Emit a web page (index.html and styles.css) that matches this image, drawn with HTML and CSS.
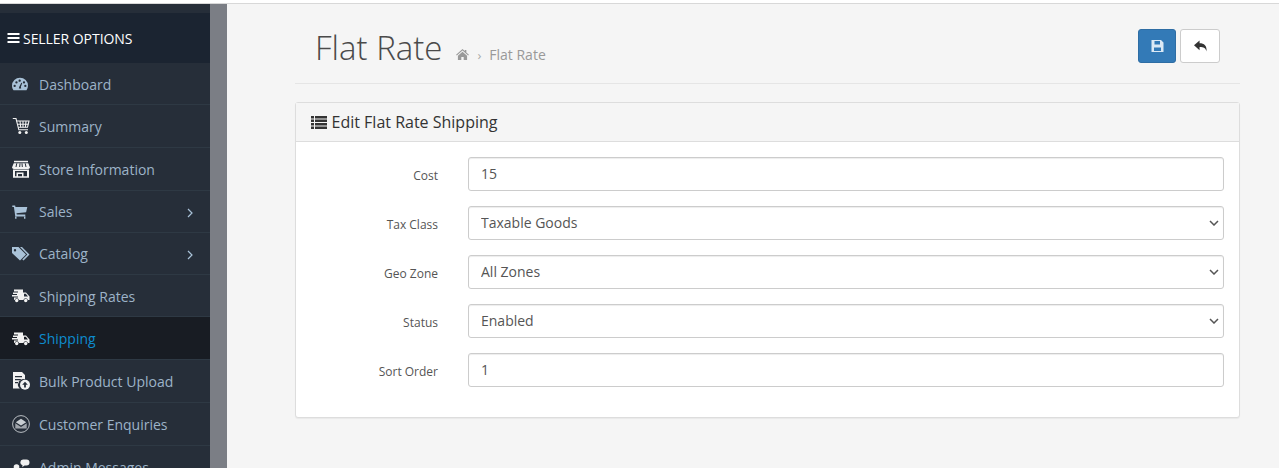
FILE: index.html
```html
<!DOCTYPE html>
<html lang="en">
<head>
<meta charset="utf-8">
<title>Flat Rate</title>
<link rel="stylesheet" href="styles.css">
</head>
<body>
<div class="topbar"></div>
<div class="layout">
  <aside class="sidebar">
    <div class="side-head"><svg class="bars" viewBox="0 0 12 10"><path d="M0 0h12v2H0zM0 4h12v2H0zM0 8h12v2H0z"/></svg>SELLER OPTIONS</div>
    <nav class="menu">
      <a class="item low"><svg class="ic blue" viewBox="0 -3.100 20.250 20.250"><path fill-rule="evenodd" d="M9 0a9 9 0 0 0-9 9c0 2 .7 3.700 1.700 5h14.600A8.800 8.800 0 0 0 18 9a9 9 0 0 0-9-9zM3 10.500a1.300 1.300 0 1 1 0-2.600 1.300 1.300 0 0 1 0 2.600zm2-4a1.300 1.300 0 1 1 0-2.600 1.300 1.300 0 0 1 0 2.600zm4-2A1.300 1.300 0 1 1 9 2a1.300 1.300 0 0 1 0 2.500zM10.300 12H7.700l.5-2 2.300-4.500 1 .4L10 10zm4.700-1.500a1.300 1.300 0 1 1 0-2.600 1.300 1.300 0 0 1 0 2.600zm-1.500-4a1.300 1.300 0 1 1 0-2.600 1.300 1.300 0 0 1 0 2.600z"/></svg>Dashboard</a>
      <a class="item tall"><svg class="ic white" viewBox="0 0 18 18"><g class="line"><path d="M.8 1.500h3.200l2.800 11.300h9.200"/><path d="M4.600 4H17l-1.500 6.300H6.100"/><path d="M8 4l.7 6.300M11 4v6.300M14 4l-.6 6.300M5.400 7.200h11"/></g><circle cx="7.800" cy="15.400" r="1.500"/><circle cx="14.300" cy="15.400" r="1.500"/></svg>Summary</a>
      <a class="item tall"><svg class="ic white" viewBox="0 0 18 18"><path d="M2 .8h14v1.500H2z"/><path d="M1.700 3.300h14.600L18 7.600a1.800 1.800 0 0 1-1.800 1.400H1.800A1.800 1.800 0 0 1 0 7.600z"/><g class="cut"><path d="M4.800 3.300 4 7M8 3.300 7.700 7M10 3.300 10.300 7M13.200 3.300 14 7"/></g><path fill-rule="evenodd" d="M1 9.500h16v8.300H1zm2 1.500v5.300h1.500v-3.800h7v3.800H15V11zm3 3v2.300h4V14z"/></svg>Store Information</a>
      <a class="item has-sub"><svg class="ic blue" viewBox="-.3 -2.500 18 18"><path d="M0 0h2.800l.4 1.500H15l-1.200 5.300-9.600.9.300 1.300H13V11H3L1.600 1.500H0z"/><path d="M2.800 11h1.400v2.200H2.800zM11.700 11h1.400v2.200h-1.400z"/></svg>Sales<svg class="chev" viewBox="0 0 6 10"><path d="M1 1l4 4-4 4"/></svg></a>
      <a class="item has-sub"><svg class="ic blue" viewBox="0 -2 18 18"><path fill-rule="evenodd" d="M0 0h6.500L14 7.500 8 13.500 0 6zM3 2a1.200 1.200 0 1 0 0 2.400A1.200 1.200 0 0 0 3 2z"/><path d="M8 0h2l7.500 7.500-6 6-1.200-1.100 5-4.900z"/></svg>Catalog<svg class="chev" viewBox="0 0 6 10"><path d="M1 1l4 4-4 4"/></svg></a>
      <a class="item low"><svg class="ic white" viewBox="0 -2.500 18 18"><path d="M2 0h9v3h3l3.500 4v3.500h-1.600a2.300 2.300 0 0 0-4.500 0H7a2.300 2.300 0 0 0-4.500 0H2V8h4V7H0V5.500h5v-1H1V3h5V2H2zm10 4.200V7h4l-2.200-2.800z"/><circle cx="4.700" cy="11" r="1.700"/><circle cx="13.700" cy="11" r="1.700"/></svg>Shipping Rates</a>
      <a class="item active tall low"><svg class="ic white" viewBox="0 -2.500 18 18"><path d="M2 0h9v3h3l3.500 4v3.500h-1.600a2.300 2.300 0 0 0-4.500 0H7a2.300 2.300 0 0 0-4.500 0H2V8h4V7H0V5.500h5v-1H1V3h5V2H2zm10 4.200V7h4l-2.200-2.800z"/><circle cx="4.700" cy="11" r="1.700"/><circle cx="13.700" cy="11" r="1.700"/></svg>Shipping</a>
      <a class="item tall"><svg class="ic white" viewBox="0 0 18 18"><path fill-rule="evenodd" d="M1 0h9l3 3v4.300A5.400 5.400 0 0 0 7.800 16.500H1zm2 4v1.300h7V4zm0 3v1.300h6V7zm0 3v1.300h4V10z"/><circle cx="13" cy="12.800" r="5"/><path class="arrow" d="M13 9.700l2.800 3h-1.900v2.800h-1.800v-2.800h-1.900z"/></svg>Bulk Product Upload</a>
      <a class="item tall"><svg class="ic soft" viewBox="0 0 18 18"><circle cx="9" cy="9" r="8.400" fill="none" stroke="currentColor" stroke-width=".9"/><path d="M9 3.800l5.200 3.400L9 10.500 3.800 7.200z"/><path d="M3.300 8.300 9 12l5.700-3.700V13.500H3.300z" opacity=".75"/></svg>Customer Enquiries</a>
      <a class="item tall"><svg class="ic white" viewBox="0 0 18 18"><circle cx="4.500" cy="9" r="2.800"/><path d="M.7 17c0-3 1.500-4.500 3.800-4.500S8.300 14 8.300 17z"/><path d="M11 1.500h3.500a3 3 0 0 1 0 6h-2l-2.300 1.800.4-1.900A3 3 0 0 1 11 1.500z"/></svg>Admin Messages</a>
    </nav>
  </aside>
  <div class="gutter"></div>
  <main class="content">
    <header class="page-head">
      <div class="title-wrap">
        <h1>Flat Rate</h1>
        <ul class="crumbs">
          <li><svg class="home" viewBox="0 0 14 12"><path d="M7 0l2.500 2.200V1h1.700v2.700L14 6.200l-.8.900L7 1.700.8 7.100 0 6.200zM2 7.400 7 3l5 4.400V12H8.300V8.700H5.700V12H2z"/></svg></li>
          <li class="sep">›</li>
          <li>Flat Rate</li>
        </ul>
      </div>
      <div class="actions">
        <button class="btn primary" type="button"><svg viewBox="0 0 12 12"><path fill-rule="evenodd" d="M0 0h9.500L12 2.500V12H0zM3 1v3.500h5.500V1zM2.500 7.500V11h7V7.500z"/></svg></button>
        <button class="btn plain" type="button"><svg viewBox="0 0 14 12"><path d="M6 0v3c5 0 8 2.500 7.500 9-.8-3.500-3-4.800-7.500-4.800V10.500L0 5.200z"/></svg></button>
      </div>
    </header>
    <section class="panel">
      <div class="panel-head"><svg class="list" viewBox="0 0 16 13"><path d="M0 0h3v2.500H0zM4 0h12v2.500H4zM0 3.500h3V6H0zM4 3.500h12V6H4zM0 7h3v2.500H0zM4 7h12v2.500H4zM0 10.500h3V13H0zM4 10.500h12V13H4z"/></svg><h3>Edit Flat Rate Shipping</h3></div>
      <form class="panel-body">
        <div class="field"><label for="c">Cost</label><input id="c" class="control" value="15"></div>
        <div class="field"><label for="t">Tax Class</label><div class="select-box"><select id="t" class="control"><option>Taxable Goods</option></select><svg class="caret" viewBox="0 0 10 6"><path d="M1 1l4 4 4-4"/></svg></div></div>
        <div class="field"><label for="g">Geo Zone</label><div class="select-box"><select id="g" class="control"><option>All Zones</option></select><svg class="caret" viewBox="0 0 10 6"><path d="M1 1l4 4 4-4"/></svg></div></div>
        <div class="field"><label for="s">Status</label><div class="select-box"><select id="s" class="control"><option>Enabled</option></select><svg class="caret" viewBox="0 0 10 6"><path d="M1 1l4 4 4-4"/></svg></div></div>
        <div class="field"><label for="o">Sort Order</label><input id="o" class="control" value="1"></div>
      </form>
    </section>
  </main>
</div>
</body>
</html>
```
FILE: styles.css
```css
* { box-sizing: border-box; }
html, body { margin: 0; height: 100%; overflow: hidden; }
body { background: #f5f5f5; font-family: "Open Sans", sans-serif; color: #444; font-size: 14px; }
.topbar { height: 4px; background: linear-gradient(#fff 0, #fff 2.500px, #d8d8d8 3.500px, #e4e4e4 4px); }
.layout { display: flex; height: 464px; }
.sidebar { width: 210px; flex: none; background: #262e39; padding-top: 9px; overflow: hidden; }
.side-head { height: 50px; background: #1b2431; color: #fff; font-size: 14px; display: flex; align-items: center; padding-left: 7px; letter-spacing: -.05px; }
.bars { width: 13px; height: 10px; fill: #fff; margin-right: 3px; }
.menu { display: flex; flex-direction: column; }
.item { height: 42px; flex: none; display: flex; align-items: center; padding-left: 12px; color: #9db3c8; font-size: 14px; border-bottom: 1px solid #2e3944; position: relative; }
.item.tall { height: 43px; }
.item.low { padding-top: 1px; }
.ic { width: 18px; height: 18px; margin-right: 9px; flex: none; fill: currentColor; }
.ic.blue { color: #a9c2d8; }
.ic.white { color: #f2f2f2; }
.ic.soft { color: #c9ced2; }
.line { fill: none; stroke: currentColor; stroke-width: 1.100; }
.cut { fill: none; stroke: #262e39; stroke-width: 1; }
.arrow { fill: #262e39; }
.item.active { background: #181c23; color: #0d8ccf; }
.chev { position: absolute; right: 17px; top: 17px; width: 6px; height: 10px; fill: none; stroke: #a9c2d8; stroke-width: 1.200; }
.gutter { width: 17px; flex: none; background: #7b7e85; }
.content { flex: none; width: 945px; margin-left: 68px; }
.page-head { height: 80px; border-bottom: 1px solid #e5e5e5; display: flex; justify-content: space-between; padding: 24px 20px 0 20px; }
.title-wrap { display: flex; align-items: baseline; }
h1 { margin: 0; font-weight: 300; font-size: 33px; line-height: 40px; color: #4a4a4a; }
.crumbs { list-style: none; margin: 0 0 0 14px; padding: 0; display: flex; align-items: center; gap: 8px; color: #999; font-size: 14px; }
.home { width: 13px; height: 11px; fill: #999; display: block; }
.sep { color: #aaa; font-size: 13px; }
.actions { display: flex; gap: 4px; align-items: flex-start; margin-top: 1px; }
.btn { width: 38px; height: 34px; border-radius: 3px; border: 1px solid #ccc; padding: 0; display: flex; align-items: center; justify-content: center; }
.btn svg { width: 13px; height: 12px; }
.btn.primary { background: #337ab7; border-color: #2e6da4; }
.btn.primary svg { fill: #dbe9f5; }
.btn.plain { background: #fff; width: 40px; }
.btn.plain svg { fill: #333; }
.panel { margin-top: 18px; background: #fff; border: 1px solid #ddd; border-radius: 3px; box-shadow: 0 1px 1px rgba(0,0,0,.05); height: 316px; }
.panel-head { height: 39px; background: #f5f5f5; border-bottom: 1px solid #ddd; display: flex; align-items: center; padding-left: 15px; gap: 4.500px; }
.list { width: 16px; height: 13px; fill: #333; }
h3 { margin: 0; font-size: 16px; font-weight: 400; color: #333; }
.panel-body { padding: 15px 15px 0 0; display: flex; flex-direction: column; gap: 15px; }
.field { display: flex; align-items: center; }
label { width: 142px; text-align: right; font-size: 12px; color: #555; margin-right: 30px; padding-top: 3px; }
.control { flex: 1; height: 34px; border: 1px solid #ccc; border-radius: 3px; background: #fff; padding: 0 12px 2px; font: 14px "Open Sans", sans-serif; color: #555; box-shadow: inset 0 1px 1px rgba(0,0,0,.075); }
.select-box { flex: 1; display: flex; position: relative; }
select.control { appearance: none; width: 100%; }
.caret { position: absolute; right: 5px; top: 14px; width: 10px; height: 6px; fill: none; stroke: #555; stroke-width: 1.500; pointer-events: none; }
```
